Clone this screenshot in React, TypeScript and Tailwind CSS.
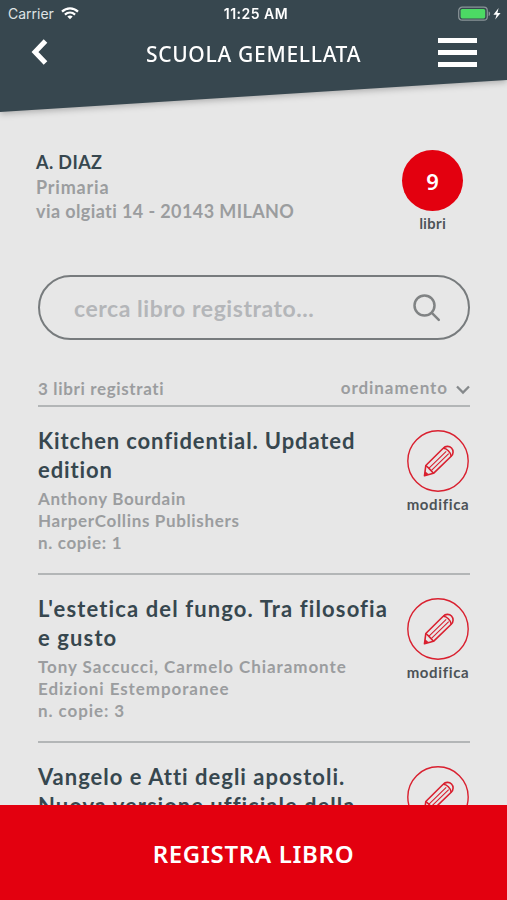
interface Book {
  title: string[];
  meta: string[];
  titleClass: string;
  metaClass: string;
}

const books: Book[] = [
  {
    title: ["Kitchen confidential. Updated", "edition"],
    meta: ["Anthony Bourdain", "HarperCollins Publishers", "n. copie: 1"],
    titleClass: "tracking-[0.88px]",
    metaClass: "tracking-[0.65px]",
  },
  {
    title: ["L'estetica del fungo. Tra filosofia", "e gusto"],
    meta: ["Tony Saccucci, Carmelo Chiaramonte", "Edizioni Estemporanee", "n. copie: 3"],
    titleClass: "tracking-[1.12px]",
    metaClass: "tracking-[0.92px]",
  },
  {
    title: ["Vangelo e Atti degli apostoli.", "Nuova versione ufficiale della"],
    meta: [],
    titleClass: "tracking-[1px]",
    metaClass: "tracking-[0.65px]",
  },
];

function WifiIcon() {
  return (
    <svg width="18" height="13" viewBox="0 0 18 13" fill="none" stroke="white" strokeWidth="2.2">
      <path d="M1 4.6C5.6.3 12.4.3 17 4.6" />
      <path d="M3.9 7.6c3-2.7 7.2-2.7 10.2 0" />
      <path d="M9 12.2 6.3 9.5c1.6-1.4 3.8-1.4 5.4 0Z" fill="white" stroke="none" />
    </svg>
  );
}

function BatteryIcon() {
  return (
    <svg width="44" height="16" viewBox="0 0 44 16">
      <rect x=".7" y="1.2" width="28.6" height="13" rx="3.5" fill="none" stroke="#8b9599" strokeWidth="1.2" />
      <rect x="2.6" y="3" width="24.6" height="9.4" rx="1.6" fill="#4cd964" />
      <path d="M30.6 5.5c2 .6 2 3.9 0 4.5Z" fill="#8b9599" />
      <path d="m40.6 2-5.2 6.7h3.2L37.2 13.6 42.6 7h-3.2Z" fill="white" />
    </svg>
  );
}

function PencilIcon() {
  return (
    <svg
      width="62"
      height="62"
      viewBox="0 0 62 62"
      fill="none"
      stroke="#d9202f"
      strokeWidth="1.6"
      strokeLinejoin="round"
    >
      <circle cx="31" cy="31" r="30.2" strokeWidth="1.4" />
      <path d="M18.8 35.5 36.2 18.3c2.2-2.4 6-2.7 8.3-.3s2 6-.3 8.3L26.5 43.3l-9 2.4Z" />
      <path d="M36.2 18.3c3.6.2 7.4 3.6 8 8" />
      <path d="m22 38.2 17.2-16.9M24.5 40.3l17.2-16.7" strokeWidth="1.1" />
      <path d="M18.8 35.5 21.5 37.9 26.5 43.3" />
      <path d="m17.5 45.7.7-4.5 3.8 3.3Z" fill="#d9202f" stroke="none" />
    </svg>
  );
}

function BookRow({ book }: { book: Book }) {
  return (
    <li className="flex h-[168px] shrink-0 justify-between border-b-2 border-[#b3b6b7] pt-5">
      <div className="whitespace-nowrap font-bold">
        <h2 className={`text-[22px] leading-[28.5px] text-[#37474f] ${book.titleClass}`}>
          {book.title.map((line) => (
            <span key={line} className="block">
              {line}
            </span>
          ))}
        </h2>
        <div className={`mt-1 text-[17px] leading-[22px] text-[#9b9d9f] ${book.metaClass}`}>
          {book.meta.map((line) => (
            <p key={line}>{line}</p>
          ))}
        </div>
      </div>
      <button className="mt-[3px] flex w-16 shrink-0 flex-col items-center self-start">
        <PencilIcon />
        <span className="mt-px text-[15px] font-bold leading-[22px] tracking-[0.65px] text-[#4c5357]">modifica</span>
      </button>
    </li>
  );
}

export default function App() {
  return (
    <div className="flex h-[900px] w-[507px] flex-col overflow-hidden bg-[#e7e7e7] font-['Lato',sans-serif]">
      <header className="shrink-0 drop-shadow-[0_2px_3px_rgba(0,0,0,0.25)]">
        <div className="h-28 bg-[#37474f] text-white [clip-path:polygon(0_0,100%_0,100%_80px,0_112px)]">
          <div className="grid h-[27px] grid-cols-3 items-center pl-2 pr-[5px] font-['Inter',sans-serif] text-[14px]">
            <div className="flex items-center gap-[7px] text-[#dfe3e5]">
              Carrier
              <WifiIcon />
            </div>
            <span className="pl-0.5 text-center font-semibold tracking-[0.5px]">11:25 AM</span>
            <div className="flex justify-end">
              <BatteryIcon />
            </div>
          </div>
          <div className="flex h-[50px] items-center justify-between pl-[31px] pr-[30px]">
            <svg width="17" height="26" viewBox="0 0 17 26" fill="none" stroke="white" strokeWidth="5">
              <path d="M14.5 2 4 13l10.500 11" />
            </svg>
            <h1 className="ml-[21px] mt-[5px] font-['Noto_Sans',sans-serif] text-[21px] font-medium tracking-[0.7px]">
              SCUOLA GEMELLATA
            </h1>
            <div className="flex w-[39px] flex-col gap-[7px]">
              <span className="h-[5px] bg-white" />
              <span className="h-[5px] bg-white" />
              <span className="h-[5px] bg-white" />
            </div>
          </div>
        </div>
      </header>

      <section className="flex h-[163px] shrink-0 items-start justify-between pl-9 pr-11 pt-[38px]">
        <div className="text-[18px] font-bold leading-[24.5px] text-[#9b9d9f]">
          <p className="tracking-[0.4px] text-[#37474f]">A. DIAZ</p>
          <p className="tracking-[0.8px]">Primaria</p>
          <p className="tracking-[0.4px]">via olgiati 14 - 20143 MILANO</p>
        </div>
        <div className="flex flex-col items-center">
          <div className="flex size-[61px] items-center justify-center rounded-full bg-[#e3000f] pt-0.5 font-['Noto_Sans',sans-serif] text-[22px] font-semibold text-white">
            9
          </div>
          <span className="mt-[3px] font-['Noto_Sans',sans-serif] text-[14px] font-semibold leading-5 text-[#4c5357]">
            libri
          </span>
        </div>
      </section>

      <main className="flex min-h-0 flex-1 flex-col overflow-hidden pl-[38px] pr-[37px]">
        <div className="flex h-[65px] shrink-0 items-center justify-between rounded-full border-2 border-[#777b7d] pl-[34px] pr-[27px]">
          <span className="pt-0.5 text-[23px] font-bold tracking-[0.55px] text-[#b4b6b9]">
            cerca libro registrato...
          </span>
          <svg width="28" height="28" viewBox="0 0 28 28" fill="none" stroke="#808384" strokeWidth="2.5" strokeLinecap="round">
            <circle cx="11.5" cy="11.5" r="10" />
            <path d="m18.8 18.8 7 7" />
          </svg>
        </div>
        <div className="mt-7 flex h-[39px] shrink-0 items-center justify-between border-b-2 border-[#b3b6b7] pt-0.5 text-[17px] font-bold text-[#9b9d9f]">
          <span className="pt-0.5 tracking-[0.65px]">3 libri registrati</span>
          <span className="flex items-center gap-2 tracking-[0.95px]">
            ordinamento
            <svg className="mt-1" width="14" height="10" viewBox="0 0 14 10" fill="none" stroke="#85898b" strokeWidth="2.3">
              <path d="m1 1.5 6 6 6-6" />
            </svg>
          </span>
        </div>
        <ul className="flex flex-col">
          {books.map((book) => (
            <BookRow key={book.title[0]} book={book} />
          ))}
        </ul>
      </main>

      <button className="h-[95px] shrink-0 bg-[#e3000f] pt-0.5 font-['Noto_Sans',sans-serif] text-[24px] font-semibold tracking-[0.7px] text-white">
        REGISTRA LIBRO
      </button>
    </div>
  );
}
